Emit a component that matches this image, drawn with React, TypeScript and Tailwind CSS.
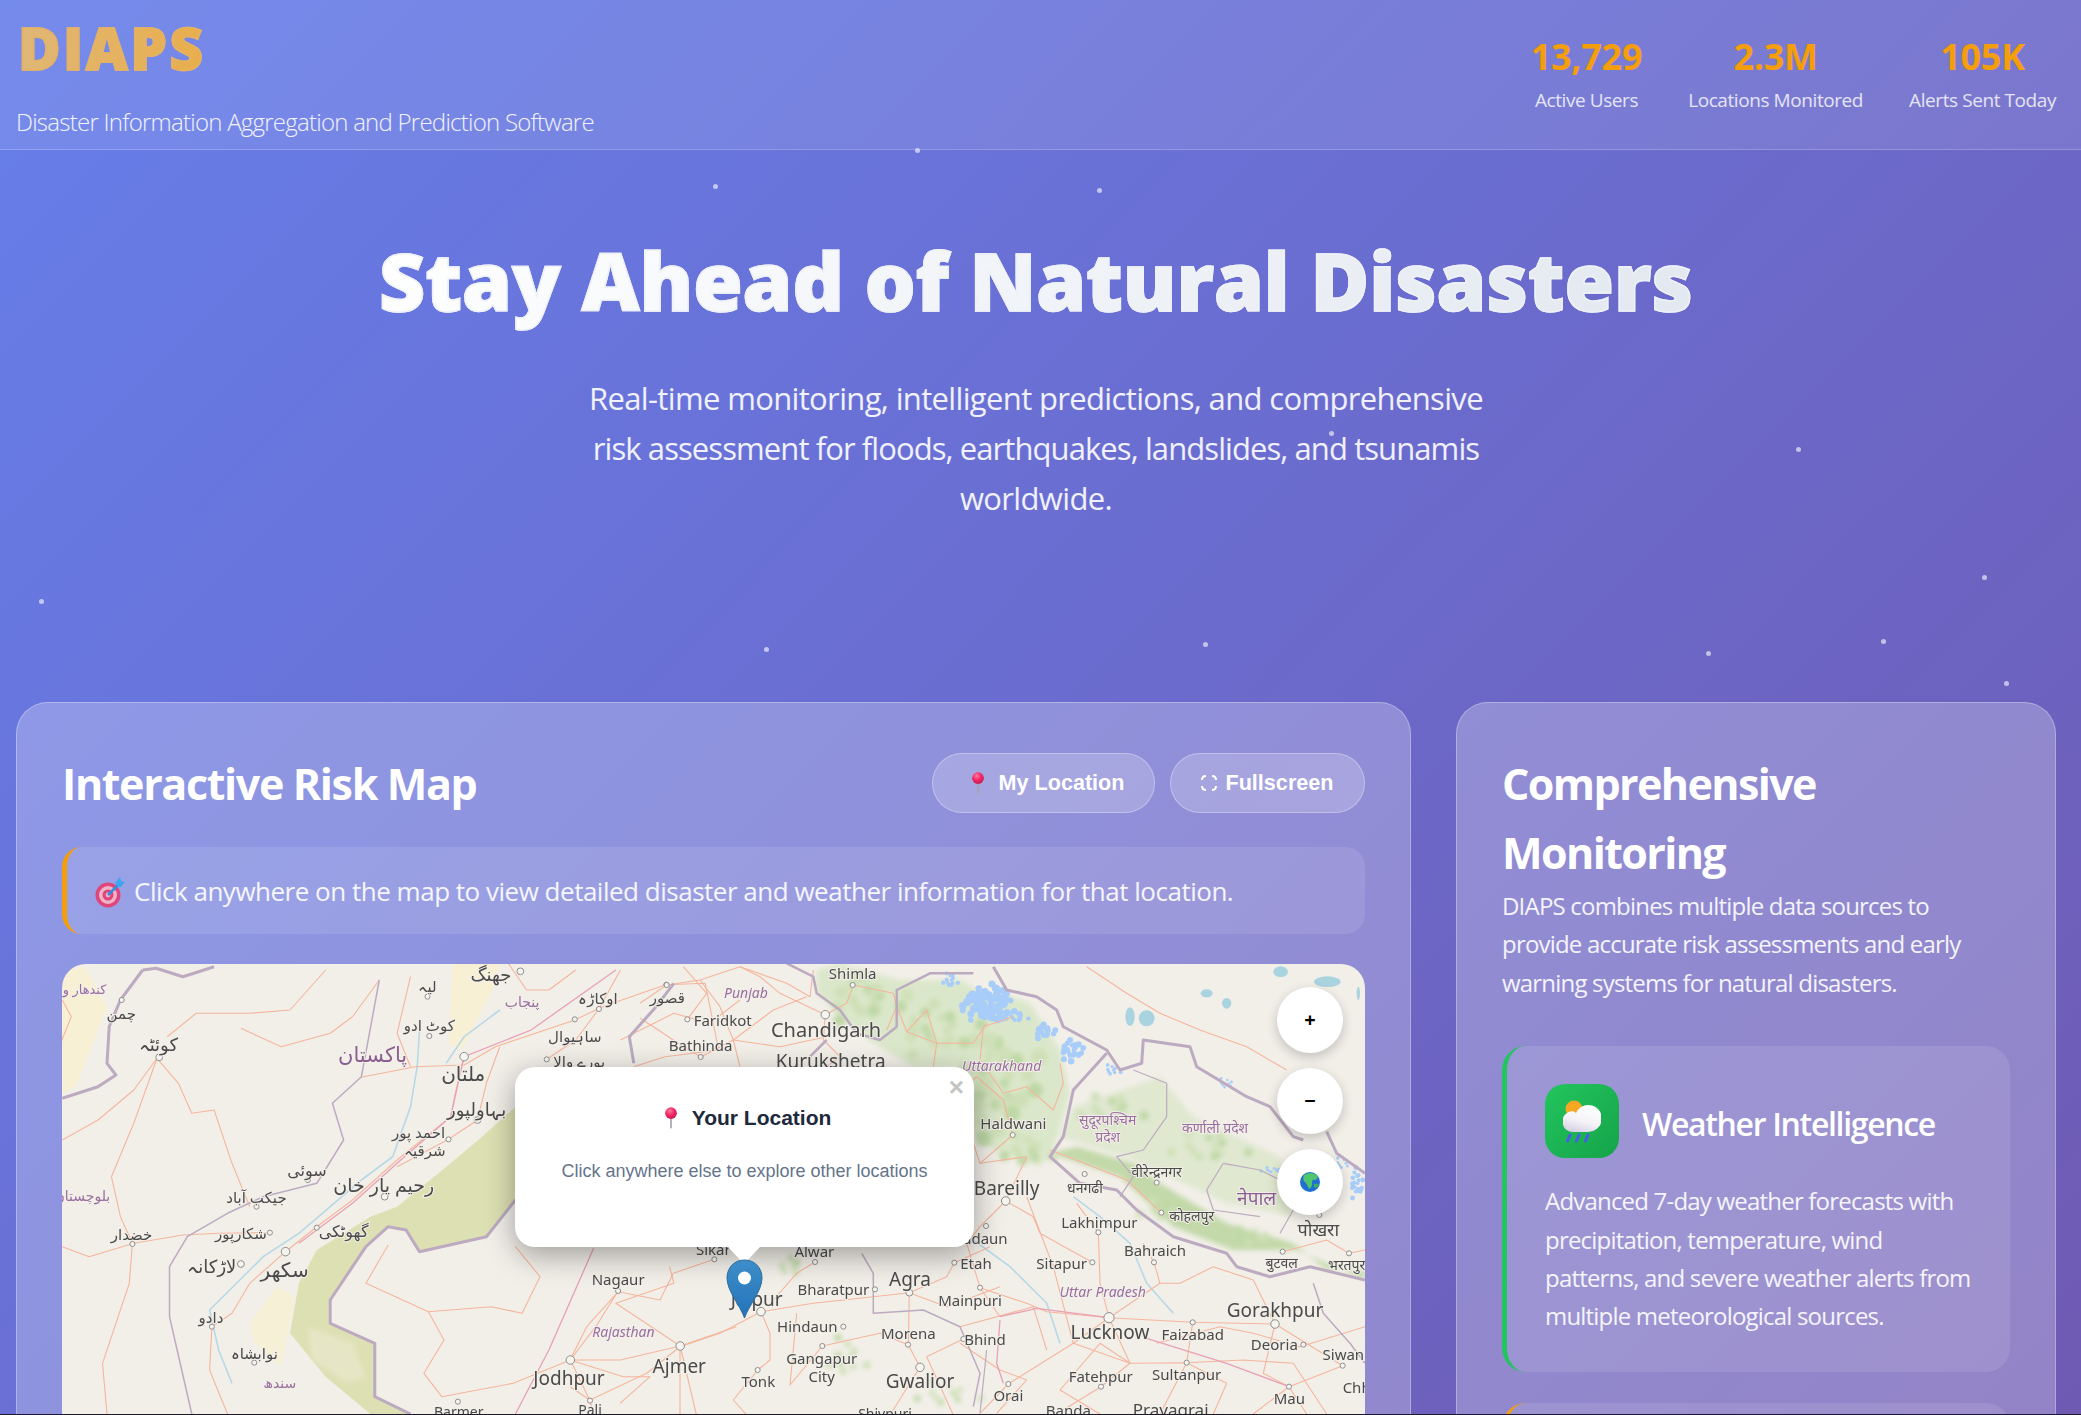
import React from "react";

type P = [number, number];
const z5 = (x: number, y: number): P => [40 + x / 2.24, 950 + y / 3];
const z6 = (x: number, y: number): P => [480 + x / 3, 1040 + y / 3];
const z7 = (x: number, y: number): P => [960 + x / 3, 950 + y / 3];
const z9 = (x: number, y: number): P => [640 + x / 3, 960 + y / 3];
type Z = typeof z5;
const pts = (z: Z, a: number[]) => {
  const out: string[] = [];
  for (let i = 0; i < a.length; i += 2) {
    const [x, y] = z(a[i], a[i + 1]);
    out.push(`${x.toFixed(1)},${y.toFixed(1)}`);
  }
  return out.join(" ");
};

const PURPLE = "#9a6f9f";
const DARK = "#4a4a4a";
const labels: [Z, string, number, number, number, string?, boolean?][] = [
  [z5, "کندهار و", 100, 118, 13, PURPLE],
  [z5, "چمن", 182, 190, 15],
  [z5, "کوئٹہ", 265, 285, 18],
  [z5, "پاکستان", 745, 315, 21, "#8a5f90"],
  [z5, "جھنگ", 1010, 75, 18],
  [z5, "لیہ", 868, 110, 15],
  [z5, "پنجاب", 1080, 157, 14, PURPLE],
  [z5, "کوٹ ادو", 872, 228, 15],
  [z5, "اوکاڑہ", 1250, 147, 15],
  [z5, "قصور", 1405, 143, 15],
  [z5, "ساہیوال", 1198, 260, 15],
  [z5, "بورے والا", 1208, 335, 15],
  [z5, "ملتان", 948, 372, 20],
  [z5, "بہاولپور", 978, 480, 18],
  [z5, "احمد پور", 848, 548, 15],
  [z5, "شرقیہ", 862, 602, 15],
  [z5, "سوئی", 598, 660, 16],
  [z5, "رحیم یار خان", 770, 707, 19],
  [z5, "جیکب آباد", 485, 742, 15],
  [z5, "بلوچستان", 95, 738, 14, PURPLE],
  [z5, "خضدار", 205, 855, 15],
  [z5, "شکارپور", 450, 852, 15],
  [z5, "گھوٹکی", 680, 843, 16],
  [z5, "لاڑکانہ", 385, 950, 18],
  [z5, "سکھر", 548, 960, 20],
  [z5, "دادو", 383, 1102, 15],
  [z5, "نوابشاہ", 480, 1212, 15],
  [z5, "سندھ", 537, 1298, 14, PURPLE],
  [z5, "Nagaur", 1295, 990, 15],
  [z5, "Rajasthan", 1307, 1147, 14, PURPLE, true],
  [z5, "Jodhpur", 1185, 1285, 19],
  [z5, "Ajmer", 1432, 1248, 19],
  [z5, "Barmer", 938, 1385, 14],
  [z5, "Pali", 1232, 1380, 14],
  [z6, "Sikar", 700, 628, 15],
  [z6, "Alwar", 1003, 635, 15],
  [z6, "Bharatpur", 1060, 750, 15],
  [z6, "Jaipur", 830, 778, 19],
  [z6, "Agra", 1290, 718, 19],
  [z6, "Etah", 1488, 670, 15],
  [z6, "Hindaun", 982, 860, 15],
  [z6, "Morena", 1285, 882, 15],
  [z6, "Bhind", 1515, 900, 15],
  [z6, "Gangapur", 1025, 955, 15],
  [z6, "City", 1025, 1010, 15],
  [z6, "Tonk", 835, 1025, 15],
  [z6, "Gwalior", 1320, 1025, 19],
  [z6, "Shivpuri", 1215, 1122, 14],
  [z7, "Uttarakhand", 125, 347, 14, PURPLE, true],
  [z7, "Haldwani", 160, 520, 15],
  [z7, "Bareilly", 140, 714, 19],
  [z7, "Budaun", 60, 866, 15],
  [z7, "Mainpuri", 30, 1052, 15],
  [z7, "Lakhimpur", 418, 817, 15],
  [z7, "Sitapur", 305, 940, 15],
  [z7, "Bahraich", 585, 903, 15],
  [z7, "Uttar Pradesh", 428, 1027, 14, PURPLE, true],
  [z7, "Gorakhpur", 945, 1082, 19],
  [z7, "Lucknow", 450, 1147, 19],
  [z7, "Faizabad", 698, 1155, 15],
  [z7, "Deoria", 943, 1184, 15],
  [z7, "Siwan", 1150, 1214, 15],
  [z7, "Chh", 1190, 1312, 15],
  [z7, "Fatehpur", 422, 1280, 15],
  [z7, "Sultanpur", 680, 1275, 15],
  [z7, "Mau", 988, 1345, 15],
  [z7, "Orai", 145, 1337, 15],
  [z7, "Banda", 325, 1382, 15],
  [z7, "Prayagraj", 632, 1380, 17],
  [z7, "सुदूरपश्चिम", 443, 510, 14, PURPLE],
  [z7, "प्रदेश", 443, 562, 14, PURPLE],
  [z7, "कर्णाली प्रदेश", 765, 535, 14, PURPLE],
  [z7, "वीरेन्द्रनगर", 590, 665, 14],
  [z7, "धनगढी", 375, 715, 14],
  [z7, "कोहलपुर", 695, 797, 14],
  [z7, "नेपाल", 890, 745, 19, "#8a5f90"],
  [z7, "पोखरा", 1075, 840, 18],
  [z7, "बुटवल", 965, 938, 14],
  [z7, "भरतपुर", 1160, 945, 14],
  [z9, "Shimla", 638, 42, 15],
  [z9, "Punjab", 318, 98, 14, PURPLE, true],
  [z9, "Faridkot", 248, 182, 15],
  [z9, "Chandigarh", 558, 210, 20],
  [z9, "Bathinda", 182, 257, 15],
  [z9, "Kurukshetra", 572, 305, 19],
];

const dots: [Z, number, number, number][] = [
  [z5, 183, 150, 3], [z5, 267, 322, 4], [z5, 1076, 64, 4], [z5, 868, 140, 3], [z5, 872, 258, 3], [z5, 950, 320, 5],
  [z5, 1252, 177, 3], [z5, 1198, 208, 3], [z5, 1403, 104, 3], [z5, 1135, 328, 3], [z5, 980, 510, 4], [z5, 915, 568, 3],
  [z5, 600, 690, 3], [z5, 772, 740, 4], [z5, 485, 770, 3], [z5, 515, 848, 3], [z5, 620, 833, 3], [z5, 550, 905, 5],
  [z5, 450, 942, 4], [z5, 207, 882, 3], [z5, 385, 1130, 3], [z5, 480, 1238, 3], [z5, 1295, 1023, 3], [z5, 1188, 1230, 5],
  [z5, 1434, 1188, 5], [z5, 936, 1355, 3], [z5, 1232, 1352, 3],
  [z6, 703, 658, 3], [z6, 1005, 666, 3], [z6, 1185, 748, 3], [z6, 1288, 758, 4], [z6, 843, 815, 5], [z6, 1090, 860, 3],
  [z6, 1027, 918, 3], [z6, 1284, 914, 3], [z6, 1320, 982, 5], [z6, 833, 990, 3], [z6, 1423, 668, 3], [z6, 1450, 897, 3],
  [z7, 158, 555, 3], [z7, 137, 753, 5], [z7, 78, 828, 3], [z7, 60, 1013, 3], [z7, 415, 847, 3], [z7, 397, 937, 3],
  [z7, 582, 937, 3], [z7, 590, 698, 3], [z7, 604, 788, 3], [z7, 374, 672, 3], [z7, 447, 1103, 6], [z7, 698, 1117, 3],
  [z7, 945, 1122, 5], [z7, 1030, 1184, 3], [z7, 1148, 1247, 3], [z7, 680, 1238, 3], [z7, 423, 1310, 3], [z7, 145, 1302, 3],
  [z7, 987, 1310, 3], [z7, 968, 905, 3], [z7, 1167, 910, 3], [z7, 1078, 795, 3],
  [z9, 638, 75, 3], [z9, 80, 75, 3], [z9, 142, 178, 3], [z9, 556, 164, 5], [z9, 182, 291, 3],
];

const roads: [Z, number[]][] = [
  [z5, [50, 570, 130, 510, 210, 420, 262, 325, 310, 400, 340, 490, 390, 480, 430, 640, 470, 770]],
  [z5, [262, 325, 210, 520, 160, 680, 180, 800, 207, 880, 200, 1000, 140, 1240, 150, 1392]],
  [z5, [285, 260, 350, 190, 470, 190, 560, 180, 640, 60]],
  [z5, [450, 235, 540, 290, 650, 250, 700, 200, 760, 90]],
  [z5, [720, 382, 840, 350, 950, 345, 1020, 290, 1198, 210, 1260, 170, 1400, 105]],
  [z5, [950, 320, 930, 430, 920, 500, 800, 630, 700, 750, 620, 830, 550, 905, 470, 1000, 430, 1090, 385, 1130, 380, 1260, 420, 1392]],
  [z5, [50, 890, 110, 920, 210, 880, 320, 855, 400, 850, 515, 848]],
  [z5, [980, 510, 915, 568, 800, 650]],
  [z5, [1030, 290, 1000, 400, 980, 510]],
  [z5, [1135, 328, 1200, 270, 1252, 177, 1300, 60]],
  [z5, [1403, 104, 1490, 100, 1520, 300, 1400, 320, 1330, 350]],
  [z5, [1065, 890, 1120, 980, 1080, 1090, 1010, 1070, 870, 1085, 730, 1000, 780, 885]],
  [z5, [870, 1085, 905, 1170, 860, 1270, 900, 1340, 1060, 1300, 1188, 1230]],
  [z5, [1188, 1230, 1300, 1230, 1434, 1188, 1560, 1130]],
  [z5, [1295, 1023, 1250, 1120, 1188, 1230, 1232, 1352, 1240, 1392]],
  [z5, [1410, 950, 1420, 1000, 1290, 1060, 1434, 1188, 1470, 1392]],
  [z5, [50, 150, 70, 200, 40, 300]],
  [z5, [1050, 42, 1090, 120, 1140, 120, 1200, 60]],
  [z5, [1300, 270, 1420, 190, 1500, 220, 1568, 150]],
  [z5, [830, 80, 800, 250, 830, 350]],
  [z6, [703, 658, 580, 700, 540, 780, 415, 755, 320, 860, 270, 960]],
  [z6, [843, 815, 720, 880, 600, 920, 500, 1000, 330, 1080, 270, 1040]],
  [z6, [600, 920, 600, 1125]],
  [z6, [843, 815, 870, 880, 870, 960, 833, 990, 760, 1080, 800, 1125]],
  [z6, [843, 815, 1000, 790, 1180, 770, 1288, 758, 1400, 710, 1423, 668, 1530, 620]],
  [z6, [1005, 666, 950, 700, 880, 780]],
  [z6, [1288, 758, 1285, 914, 1320, 982, 1230, 1125]],
  [z6, [1288, 758, 1400, 800, 1560, 740]],
  [z6, [1027, 918, 930, 1035, 950, 820]],
  [z6, [1450, 897, 1340, 950, 1420, 1125]],
  [z6, [270, 960, 430, 1010, 510, 1010, 420, 1090]],
  [z6, [1027, 918, 1200, 880, 1284, 914]],
  [z9, [0, 130, 80, 75, 180, 60, 300, 20, 360, 50, 420, 100, 556, 164, 620, 130, 640, 75]],
  [z9, [180, 60, 240, 140, 280, 240, 300, 320]],
  [z9, [0, 175, 40, 200, 100, 240, 182, 291, 280, 240, 400, 150, 500, 110]],
  [z9, [130, 20, 200, 100, 142, 178]],
  [z9, [556, 164, 550, 240, 600, 290, 560, 320]],
  [z9, [640, 75, 760, 100, 770, 140, 740, 210]],
  [z9, [800, 215, 860, 150, 890, 250, 1000, 250, 1040, 190]],
  [z9, [770, 140, 800, 215, 890, 250, 880, 320]],
  [z9, [300, 20, 440, 70, 510, 110, 520, 30]],
  [z9, [280, 240, 420, 260, 560, 230]],
  [z7, [137, 753, 220, 800, 240, 850, 330, 900, 397, 937]],
  [z7, [137, 753, 200, 620, 60, 640, 40, 580]],
  [z7, [137, 753, 60, 830, 20, 880, 60, 1013, 120, 1100]],
  [z7, [60, 1013, 200, 1060, 260, 1085, 447, 1103]],
  [z7, [447, 1103, 600, 1000, 660, 1000, 760, 950, 880, 990, 945, 1122]],
  [z7, [447, 1103, 420, 1000, 415, 847, 350, 760]],
  [z7, [447, 1103, 698, 1117, 945, 1122, 1148, 1247]],
  [z7, [447, 1103, 340, 1180, 145, 1302, 60, 1390]],
  [z7, [447, 1103, 510, 1240, 423, 1310, 290, 1392]],
  [z7, [510, 1240, 680, 1238, 800, 1300, 760, 1392]],
  [z7, [698, 1117, 680, 1238, 600, 1392]],
  [z7, [945, 1122, 910, 1270, 987, 1310, 1040, 1392]],
  [z7, [1148, 1247, 987, 1310, 880, 1392]],
  [z7, [600, 1000, 582, 937, 550, 880]],
  [z7, [0, 420, 50, 380, 130, 450, 158, 555, 60, 640]],
  [z7, [160, 200, 70, 230, 60, 330, 130, 430, 200, 410, 280, 480, 310, 400, 300, 340]],
  [z7, [380, 50, 500, 130, 600, 190, 720, 240, 860, 290, 980, 360]],
  [z7, [270, 600, 400, 650, 500, 690, 604, 788]],
  [z7, [968, 905, 1100, 870, 1167, 910, 1215, 900]],
  [z7, [200, 740, 280, 950, 340, 1180, 510, 1240]],
  [z7, [590, 1180, 780, 1130, 880, 1150, 1020, 1190, 1215, 1130]],
  [z7, [0, 1180, 120, 1260, 200, 1290, 110, 1390]],
  [z7, [680, 1238, 850, 1230, 1000, 1240, 1100, 1392]],
  [z7, [510, 1240, 420, 1180, 300, 1320, 420, 1392]],
  [z7, [0, 1130, 220, 1070, 260, 1200]],
];
const pink: [Z, number[]][] = [
  [z5, [1065, 1392, 1140, 1200, 1240, 895]],
  [z5, [580, 880, 700, 760, 800, 640, 920, 500, 950, 320, 1100, 240, 1290, 60]],
  [z7, [120, 1100, 230, 1075, 447, 1103]],
  [z7, [560, 1165, 800, 1240, 987, 1310]],
  [z7, [120, 1110, 110, 1240, 130, 1300]],
];
const rivers: [Z, number[]][] = [
  [z5, [850, 240, 845, 350, 830, 470, 790, 620, 720, 690, 650, 770, 580, 850, 500, 920, 440, 1000, 380, 1080, 400, 1200, 430, 1300]],
  [z5, [1030, 180, 950, 260, 910, 340]],
  [z7, [340, 740, 420, 800, 510, 880, 560, 1000, 640, 1090]],
  [z7, [40, 870, 150, 950, 260, 1060, 300, 1180]],
];
const borders: [Z, number[], number][] = [
  [z5, [230, 60, 260, 55, 320, 80, 390, 50], 3],
  [z5, [230, 60, 180, 150, 155, 230, 150, 340, 170, 375, 130, 410, 50, 445], 3],
  [z5, [1065, 750, 1000, 860, 850, 905, 820, 840, 780, 830, 730, 890, 650, 1050, 650, 1120, 750, 1180, 750, 1340, 830, 1392], 3],
  [z5, [1420, 100, 1380, 170, 1320, 260, 1330, 340], 3],
  [z5, [760, 90, 720, 380, 655, 460, 680, 570, 620, 700, 500, 740, 420, 790, 330, 860, 290, 950, 290, 1100, 340, 1392], 1.5],
  [z7, [100, 50, 140, 120, 230, 140, 290, 180, 310, 230, 440, 300, 480, 360, 545, 340, 550, 270, 690, 290, 710, 350, 860, 440, 930, 470, 1000, 560, 1030, 570], 3],
  [z7, [1100, 545, 1130, 610, 1215, 670], 3],
  [z7, [440, 310, 340, 420, 310, 560, 270, 620, 360, 700, 470, 720, 530, 780, 640, 860, 800, 910, 830, 950, 930, 980, 1050, 950, 1215, 990], 3],
  [z7, [520, 360, 620, 400, 620, 500, 550, 600, 470, 620, 520, 680, 480, 740], 1.2],
  [z7, [790, 640, 900, 660, 980, 700, 1000, 780, 960, 850], 1.2],
  [z7, [790, 640, 740, 720, 760, 780, 900, 800], 1.2],
  [z7, [1060, 1000, 1090, 1090, 1170, 1180, 1215, 1240], 1.5],
  [z7, [60, 1390, 80, 1200], 1.2],
  [z6, [1145, 640, 1180, 700, 1180, 820, 1330, 810, 1440, 860, 1500, 1000, 1480, 1100], 1.5],
  [z9, [440, 10, 520, 50, 530, 100, 600, 150, 650, 220, 720, 240, 770, 200, 770, 90, 870, 40, 1000, 40], 2.5],
  [z9, [560, 240, 510, 290], 2.5],
];

type B = [Z, number, number, number];
const blue: B[] = [];
const green: B[] = [];
const seed = (out: B[], z: Z, cx: number, cy: number, w: number, h: number, n: number, r: number) => {
  for (let i = 0; i < n; i++) {
    const a = (i * 137.5 * Math.PI) / 180;
    const d = Math.sqrt((i + 0.5) / n) * (0.75 + 0.25 * Math.sin(i * 7.3));
    out.push([z, cx + Math.cos(a) * d * w, cy + Math.sin(a) * d * h, r * (0.6 + 0.4 * Math.abs(Math.sin(i * 3.1)))]);
  }
};
seed(blue, z7, 85, 160, 90, 65, 70, 12);
seed(blue, z7, 255, 245, 38, 25, 16, 11);
seed(blue, z7, 335, 300, 48, 40, 20, 11);
seed(blue, z7, 170, 200, 45, 20, 12, 9);
seed(blue, z7, 455, 360, 30, 20, 9, 8);
seed(blue, z7, 800, 400, 40, 18, 8, 6);
seed(blue, z7, 1190, 700, 24, 60, 18, 9);
seed(blue, z7, 940, 660, 50, 10, 10, 7);
seed(blue, z7, 1150, 640, 40, 20, 8, 7);
seed(blue, z9, 930, 60, 30, 30, 12, 9);
seed(green, z7, 120, 400, 140, 200, 30, 26);
seed(green, z7, 200, 600, 90, 60, 10, 22);
seed(green, z7, 450, 480, 130, 60, 12, 20);
seed(green, z7, 740, 590, 160, 60, 12, 18);
seed(green, z7, 620, 780, 110, 40, 10, 16);
seed(green, z7, 880, 860, 100, 30, 8, 14);
seed(green, z9, 680, 120, 150, 80, 16, 24);
seed(green, z9, 900, 210, 160, 100, 18, 22);
seed(green, z6, 1100, 950, 70, 80, 10, 16);
seed(green, z6, 1400, 1060, 120, 50, 10, 14);
seed(green, z6, 930, 680, 50, 40, 6, 16);

const MapArt = () => (
  <svg viewBox="62 964 1303 451" width={1303} height={451} className="block blur-[0.45px]" style={{ fontFamily: '"Noto Sans","DejaVu Sans",sans-serif' }}>
    <defs>
      <filter id="soft" x="-10%" y="-10%" width="120%" height="120%"><feGaussianBlur stdDeviation="2.5" /></filter>
    </defs>
    <rect x="62" y="964" width="1303" height="451" fill="#f2efe9" />
    <polygon points={pts(z5, [50, 60, 100, 50, 150, 170, 80, 410, 50, 430])} fill="#f8f0d4" />
    <polygon points={pts(z5, [925, 42, 1030, 42, 1020, 100, 945, 300, 915, 280])} fill="#f8f0d4" />
    <polygon points={pts(z5, [470, 1120, 530, 1010, 570, 1040, 540, 1250, 480, 1180])} fill="#f6f0d6" />
    <polygon points={pts(z5, [1065, 470, 990, 560, 920, 640, 800, 770, 740, 800, 620, 900, 580, 1000, 560, 1150, 640, 1280, 740, 1392, 830, 1392, 750, 1340, 750, 1180, 650, 1120, 650, 1050, 730, 890, 780, 830, 820, 840, 850, 905, 1000, 860, 1065, 750])} fill="#dde0b2" />
    <polygon points={pts(z5, [600, 1130, 700, 1180, 730, 1280, 690, 1300, 610, 1230])} fill="#e6e6c6" filter="url(#soft)" />
    <g filter="url(#soft)">
      <polygon points={pts(z7, [0, 240, 130, 130, 210, 160, 300, 300, 330, 430, 280, 600, 240, 650, 100, 600, 0, 520])} fill="#dbe7ca" />
      <polygon points={pts(z7, [340, 470, 600, 380, 700, 500, 960, 620, 1000, 800, 800, 760, 500, 620, 300, 560])} fill="#e0e8d0" />
      <polygon points={pts(z9, [530, 30, 600, 12, 780, 60, 960, 60, 1080, 130, 1080, 320, 820, 320, 700, 250, 600, 170, 530, 100])} fill="#dbe7ca" />
      <polygon points={pts(z7, [270, 610, 480, 680, 640, 830, 820, 900, 1010, 900, 1215, 990, 1215, 960, 1100, 960, 1000, 880, 800, 820, 600, 700, 520, 640, 350, 590])} fill="#c3d9a9" />
      {green.map(([z, x, y, r], i) => {
        const [px, py] = z(x, y);
        return <circle key={i} cx={px} cy={py} r={r / 3} fill={i % 3 === 0 ? "#bed8a5" : "#cfe0b8"} />;
      })}
    </g>
    {blue.map(([z, x, y, r], i) => {
      const [px, py] = z(x, y);
      return <circle key={i} cx={px} cy={py} r={r / 3} fill="#a9cdf9" />;
    })}
    {([[z7, 560, 205, 24, 24], [z7, 510, 200, 14, 28], [z7, 1102, 95, 40, 16], [z7, 962, 65, 22, 16], [z7, 740, 130, 18, 12], [z7, 800, 160, 14, 16], [z7, 1195, 130, 5, 20]] as [Z, number, number, number, number][]).map(([z, x, y, rx, ry], i) => {
      const [px, py] = z(x, y);
      return <ellipse key={i} cx={px} cy={py} rx={rx / 3} ry={ry / 3} fill="#a9d3df" />;
    })}
    {rivers.map(([z, a], i) => <polyline key={i} points={pts(z, a)} fill="none" stroke="#b7d8e6" strokeWidth="1.6" />)}
    {roads.map(([z, a], i) => <polyline key={i} points={pts(z, a)} fill="none" stroke="#f5b59c" strokeWidth="1.1" strokeLinejoin="round" />)}
    {pink.map(([z, a], i) => <polyline key={i} points={pts(z, a)} fill="none" stroke="#e8a0b4" strokeWidth="1.3" />)}
    {borders.map(([z, a, w], i) => <polyline key={i} points={pts(z, a)} fill="none" stroke="#bcabc0" strokeWidth={w} strokeLinejoin="round" />)}
    {dots.map(([z, x, y, r], i) => {
      const [px, py] = z(x, y);
      return <circle key={i} cx={px} cy={py} r={r * 0.85} fill="#f6f4ef" stroke="#8f8f8f" strokeWidth="1" />;
    })}
    {labels.map(([z, t, x, y, s, c, it], i) => {
      const [px, py] = z(x, y);
      return (
        <text key={i} x={px} y={py + s * 0.35} fontSize={s} textAnchor="middle" fill={c || DARK} fontStyle={it ? "italic" : "normal"} stroke="#f2efe9" strokeWidth="2" paintOrder="stroke">
          {t}
        </text>
      );
    })}
  </svg>
);

const Pin = ({ className }: { className: string }) => (
  <svg viewBox="0 0 20 32" className={className}>
    <defs>
      <radialGradient id="pinball" cx="40%" cy="30%" r="70%">
        <stop offset="0" stopColor="#ff7ba0" />
        <stop offset="0.5" stopColor="#f52a68" />
        <stop offset="1" stopColor="#c9184f" />
      </radialGradient>
    </defs>
    <rect x="8.8" y="15" width="2.4" height="16" fill="#a7a3ad" />
    <circle cx="10" cy="9" r="8.5" fill="url(#pinball)" />
  </svg>
);

const Target = () => (
  <svg viewBox="0 0 30 34" className="h-[34px] w-[30px] shrink-0">
    <circle cx="13" cy="20" r="12.5" fill="#e0457b" />
    <circle cx="13" cy="20" r="9" fill="#f0b4c8" />
    <circle cx="13" cy="20" r="5.5" fill="#e0457b" />
    <circle cx="13" cy="20" r="2.4" fill="#f0b4c8" />
    <path d="M13 20 L24 9" stroke="#2f8fe0" strokeWidth="2.5" />
    <path d="M20 8 L25 2 L26 6 L30 7 L25 13 Z" fill="#3ea6f0" />
  </svg>
);

const Globe = () => (
  <svg viewBox="0 0 20 20" className="h-5 w-5">
    <circle cx="10" cy="10" r="10" fill="#1f6fd0" />
    <path d="M4 3 Q10 -1 17 3 Q19 7 15 8 Q12 7 12 11 Q13 14 9 17 Q7 12 5 10 Q2 8 4 3 Z" fill="#4fc66d" />
    <path d="M14 12 Q18 11 19 13 Q17 17 14 15 Z" fill="#3fb05f" />
  </svg>
);

const WeatherIcon = () => (
  <svg viewBox="0 0 38 44" className="h-11 w-[38px]">
    <defs>
      <linearGradient id="cl" x1="0.7" y1="0" x2="0.3" y2="1">
        <stop offset="0" stopColor="#ffffff" />
        <stop offset="0.6" stopColor="#f4f2f7" />
        <stop offset="1" stopColor="#d5d0e4" />
      </linearGradient>
    </defs>
    <circle cx="11" cy="10" r="8.5" fill="#f6a723" />
    <path d="M11 33 A10.5 10.5 0 0 1 9 12 A13 13 0 0 1 13 14 A13.5 13.5 0 1 1 25 33 Z" fill="url(#cl)" />
    <g stroke="#4a5be8" strokeWidth="3" strokeLinecap="round">
      <path d="M7 36 L4.5 42" />
      <path d="M16 36 L13.5 42" />
      <path d="M25 36 L22.5 42" />
    </g>
  </svg>
);

const stars: [number, number][] = [[917, 150], [715, 186], [1099, 190], [1331, 433], [1798, 449], [41, 601], [1984, 577], [766, 649], [1205, 644], [1708, 653], [1883, 641], [2006, 683]];

export default function App() {
  return (
    <div className="h-[1415px] w-full overflow-hidden font-['Open_Sans',sans-serif] text-white">
      <div className="relative h-[1414px] overflow-hidden bg-[linear-gradient(135deg,#667eea_0%,#6f5ab3_100%)]">
        {stars.map(([x, y], i) => (
          <span key={i} className="absolute h-[5px] w-[5px] rounded-full bg-white/60" style={{ left: x - 2, top: y - 2 }} />
        ))}
        <header className="relative flex h-[150px] items-center justify-between border-b border-white/20 bg-white/10 pl-4 pr-[25px]">
          <div className="flex flex-col">
            <div className="-mt-[5px] w-fit bg-[linear-gradient(90deg,#dfb777,#e9ae4c)] bg-clip-text pl-[2px] text-[58px] font-extrabold leading-[90px] tracking-[2.5px] text-transparent [-webkit-text-stroke:1.5px_#e5b263]">DIAPS</div>
            <div className="mt-[10px] text-[24px] font-light leading-[38px] tracking-[-0.75px] text-white/90">Disaster Information Aggregation and Prediction Software</div>
          </div>
          <div className="-mt-[6px] flex gap-[46px]">
            {[["13,729", "Active Users"], ["2.3M", "Locations Monitored"], ["105K", "Alerts Sent Today"]].map(([n, l]) => (
              <div key={l} className="flex flex-col items-center">
                <div className="text-[36px] font-bold leading-[56px] tracking-[-0.3px] text-[#f59e0b]">{n}</div>
                <div className="text-[19px] leading-[30px] tracking-[-0.42px] text-white/80">{l}</div>
              </div>
            ))}
          </div>
        </header>

        <main className="relative pl-4 pr-[25px]">
          <section className="flex h-[552px] flex-col items-center pt-[82px]">
            <h1 className="bg-[linear-gradient(135deg,#ffffff,#e2e8f0)] bg-clip-text pb-[10px] text-[80px] font-extrabold leading-[96px] text-transparent [-webkit-text-stroke:1.5px_#eef1f7]">Stay Ahead of Natural Disasters</h1>
            <p className="mt-[35px] text-center text-[31px] font-normal leading-[50px] tracking-[-0.65px] text-white/90">
              Real-time monitoring, intelligent predictions, and comprehensive
              <br />
              <span className="tracking-[-0.92px]">risk assessment for floods, earthquakes, landslides, and tsunamis</span>
              <br />
              worldwide.
            </p>
          </section>

          <div className="flex items-start gap-[45px]">
            <div className="w-[1395px] shrink-0 rounded-[32px] border border-white/30 bg-white/25 px-[45px] pb-[45px] pt-[46px]">
              <div className="flex items-center justify-between">
                <h2 className="text-[43px] font-bold leading-[69px] tracking-[-1.35px]">Interactive Risk Map</h2>
                <div className="-mt-[2px] flex gap-[15px] font-['Liberation_Sans',sans-serif] text-[21.6px] font-bold">
                  <button className="flex h-[60px] w-[223px] items-center justify-center gap-[14px] rounded-full border border-white/30 bg-white/20 pl-2 pt-[1px]">
                    <Pin className="h-[22px] w-[14px]" />
                    My Location
                  </button>
                  <button className="flex h-[60px] w-[195px] items-center justify-center gap-[8px] rounded-full border border-white/30 bg-white/20 pt-[1px]">
                    <svg viewBox="0 0 16 16" className="h-4 w-4" fill="none" stroke="white" strokeWidth="2">
                      <path d="M1 5 Q1 1 5 1 M11 1 Q15 1 15 5 M15 11 Q15 15 11 15 M5 15 Q1 15 1 11" />
                    </svg>
                    Fullscreen
                  </button>
                </div>
              </div>
              <div className="mt-[29px] flex h-[87px] items-center gap-[9px] rounded-[20px] border-l-[5px] border-[#f59e0b] bg-white/10 pl-[28px] pt-[2px] text-[26px] tracking-[-0.49px] text-white/90">
                <Target />
                Click anywhere on the map to view detailed disaster and weather information for that location.
              </div>
              <div className="relative mt-[30px] h-[600px] overflow-hidden rounded-[24px]">
                <MapArt />
                <div className="absolute left-[453px] top-[103px] flex h-[180px] w-[459px] flex-col items-center rounded-[20px] bg-white font-['Liberation_Sans',sans-serif] shadow-[0_8px_30px_rgba(0,0,0,0.35)]">
                  <span className="absolute right-[10px] top-[2px] text-[26px] font-bold leading-[36px] text-[#c3c3c3]">×</span>
                  <div className="mt-[37px] flex items-center gap-[14px] pl-[6px] text-[21px] font-bold leading-[28px] text-[#1e293b]">
                    <Pin className="h-[22px] w-[14px]" />
                    Your Location
                  </div>
                  <div className="mt-[25px] text-[18px] leading-[28px] text-[#64748b]">Click anywhere else to explore other locations</div>
                </div>
                <div className="absolute left-[666px] top-[283px] h-0 w-0 border-x-[16px] border-t-[17px] border-x-transparent border-t-white" />
                <svg viewBox="0 0 37 60" className="absolute left-[664px] top-[295px] h-[60px] w-[37px]">
                  <defs>
                    <linearGradient id="mk" x1="0" y1="0" x2="0" y2="1">
                      <stop offset="0" stopColor="#3d8ec9" />
                      <stop offset="1" stopColor="#2473ba" />
                    </linearGradient>
                  </defs>
                  <path d="M18.5 59 C14 46 1 32 1 19 C1 8 9 1 18.5 1 C28 1 36 8 36 19 C36 32 23 46 18.5 59 Z" fill="url(#mk)" stroke="#2e6c97" strokeWidth="1" />
                  <circle cx="18.5" cy="19" r="6.5" fill="#fff" />
                </svg>
                <div className="absolute right-[22px] top-[23px] flex flex-col gap-[15px]">
                  {["+", "−"].map((t) => (
                    <button key={t} className="flex h-[66px] w-[66px] items-center justify-center rounded-full bg-white text-[20px] font-bold text-black shadow-[0_4px_12px_rgba(0,0,0,0.2)]">{t}</button>
                  ))}
                  <button className="flex h-[66px] w-[66px] items-center justify-center rounded-full bg-white shadow-[0_4px_12px_rgba(0,0,0,0.2)]"><Globe /></button>
                </div>
              </div>
            </div>

            <div className="w-[600px] shrink-0 rounded-[32px] border border-white/30 bg-white/25 px-[45px] pb-[45px] pt-[46px]">
              <h2 className="text-[43px] font-bold leading-[69px] tracking-[-1.6px]">Comprehensive Monitoring</h2>
              <p className="text-[24px] leading-[38.4px] tracking-[-0.8px] text-white/90">DIAPS combines multiple data sources to provide accurate risk assessments and early warning systems for natural disasters.</p>
              <div className="mt-[44px] rounded-[24px] border-l-[5px] border-[#22c55e] bg-white/10 pb-[36px] pl-[38px] pr-[34px] pt-[38px]">
                <div className="flex items-center gap-[23px]">
                  <div className="flex h-[74px] w-[74px] items-center justify-center rounded-[20px] bg-[linear-gradient(135deg,#22c55e,#16a34a)]"><WeatherIcon /></div>
                  <div className="mt-[5px] text-[32px] font-semibold tracking-[-1.33px]">Weather Intelligence</div>
                </div>
                <p className="mt-[24px] text-[24px] leading-[38.4px] tracking-[-0.8px] text-white/90">Advanced 7-day weather forecasts with precipitation, temperature, wind patterns, and severe weather alerts from multiple meteorological sources.</p>
              </div>
              <div className="mt-[31px] h-[200px] rounded-[24px] border-l-[5px] border-[#f59e0b] bg-white/10" />
            </div>
          </div>
        </main>
      </div>
      <div className="h-px bg-[#1b1830]" />
    </div>
  );
}
